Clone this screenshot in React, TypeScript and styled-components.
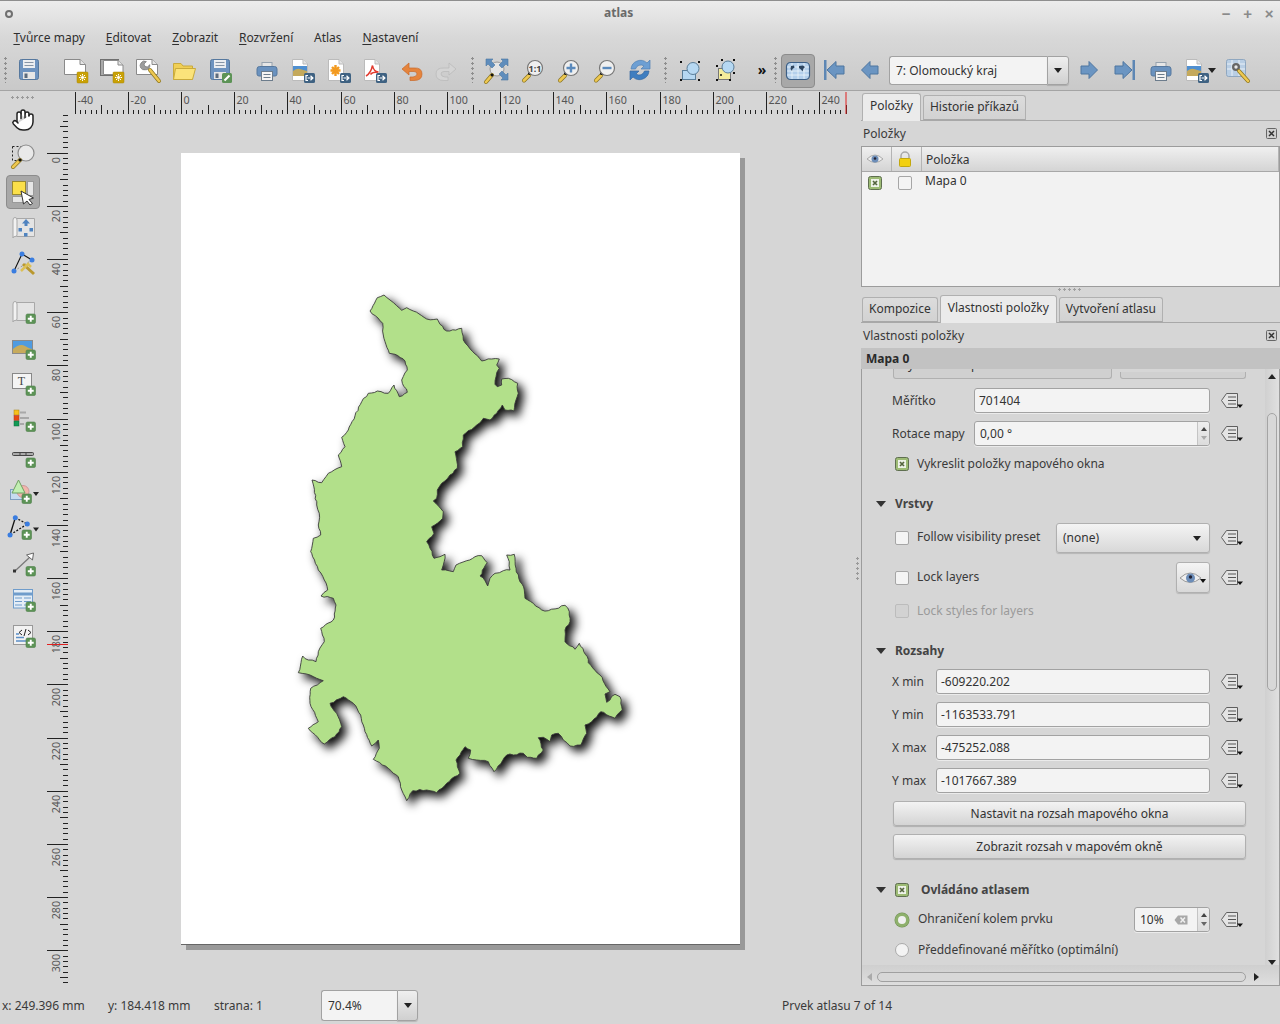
import React from 'react';
import styled, { createGlobalStyle } from 'styled-components';
import { Hand } from 'lucide-react';

const Global = createGlobalStyle`
  html, body { margin: 0; padding: 0; background: #d6d6d6; }
  * { box-sizing: border-box; }
`;

const Window = styled.div`
  width: 1280px; height: 1024px; overflow: hidden; display: flex; flex-direction: column;
  background: #d6d6d6; color: #333; font: 12px/16px "Noto Sans", "Open Sans", sans-serif;
`;
const Header = styled.div`
  height: 91px; flex: none; border-top: 1px solid #8e8e8e; border-bottom: 1px solid #a4a4a4;
  background: linear-gradient(#ececec, #d8d8d8 40%, #c9c9c9);
  display: flex; flex-direction: column;
`;
const TitleBar = styled.div`
  height: 25px; flex: none; display: flex; align-items: center; padding: 0 0 0 5px; position: relative;
`;
const WinDot = styled.span`
  width: 8px; height: 8px; border-radius: 50%; border: 2px solid #707070; margin-right: auto;
`;
const WinTitle = styled.span`
  position: absolute; left: 604px; top: 4px; font-weight: 700; font-size: 12px; color: #6a6a6a;
`;
const WinControl = styled.span`
  width: 21.5px; height: 16px; text-align: center; color: #8a8a8a; font: 700 15px/16px "Liberation Sans", sans-serif;
`;
const MenuBar = styled.div`
  height: 24px; flex: none; display: flex; align-items: center; padding-left: 3px; color: #2f2f2f;
`;
const MenuItem = styled.span`
  padding: 0 10.4px; u { text-underline-offset: 2px; }
`;
const Toolbar = styled.div`
  height: 39px; flex: none; display: flex; align-items: center; padding: 1px 0 0 4px;
`;
const Grip = styled.span<{ $mx?: number }>`
  width: 3px; height: 26px; flex: none; margin: 0 ${p => p.$mx ?? 2}px;
  background: radial-gradient(circle at 1.5px 1.5px, #8e8e8e 1.2px, transparent 1.4px) 0 0 / 3px 5px;
`;
const ToolButton = styled.span<{ $ml?: number; $w?: number }>`
  width: ${p => p.$w ?? 36}px; height: 36px; flex: none; display: flex; align-items: center; justify-content: center;
  margin-left: ${p => p.$ml ?? 0}px;
`;
const ToggledTool = styled(ToolButton)`
  width: 34px; height: 34px; margin-top: 2px; background: #a8a8a8; border: 1px solid #8c8c8c; border-radius: 4px;
`;
const More = styled.span`
  width: 20px; flex: none; margin-left: 8px; text-align: center; font: 700 14px/16px "Noto Sans", sans-serif; color: #111;
`;
const AtlasCombo = styled.div`
  width: 180px; height: 29px; flex: none; margin: 1px 0 0 1px; display: flex;
`;
const ComboField = styled.div`
  flex: 1; background: #f3f3f3; border: 1px solid #a2a2a2; border-right: none; border-radius: 3px 0 0 3px;
  padding-left: 6px; display: flex; align-items: center; color: #333; line-height: 16px;
`;
const ComboDrop = styled.div<{ $w: number }>`
  width: ${p => p.$w}px; flex: none; border: 1px solid #a2a2a2; border-radius: 0 3px 3px 0;
  background: linear-gradient(#efefef, #d0d0d0); display: flex; align-items: center; justify-content: center;
  box-shadow: 0 1px 1px rgba(0,0,0,.15);
`;
const DownTri = styled.span`
  width: 0; height: 0; border: 4px solid transparent; border-top: 5px solid #222; border-bottom: 0;
`;
const ExportDrop = styled(DownTri)`
  flex: none; margin-left: -7px;
`;

const Main = styled.div`
  flex: 1; min-height: 0; display: flex;
`;
const LeftBar = styled.div`
  width: 46px; flex: none; display: flex; flex-direction: column; align-items: center; padding-top: 5px;
`;
const LeftGrip = styled.div`
  width: 24px; height: 3px; margin-bottom: 3px; flex: none;
  background: radial-gradient(circle at 1.5px 1.5px, #9a9a9a 1.2px, transparent 1.4px) 0 0 / 5px 3px;
`;
const LeftButton = styled.div<{ $ml?: number; $mt?: number }>`
  width: 34px; height: 36px; flex: none; display: flex; align-items: center; justify-content: center;
  margin-top: ${p => p.$mt ?? 0}px; 
`;
const LeftToggled = styled(LeftButton)`
  height: 34px; margin: 1px 0; background: #a8a8a8; border: 1px solid #8c8c8c; border-radius: 4px;
`;
const Center = styled.div`
  width: 807px; flex: none; display: grid; grid-template-columns: 24px 783px; grid-template-rows: 23px 1fr;
`;
const Corner = styled.div``;
const RulerSvg = styled.svg`
  display: block;
  text { font-family: "Noto Sans", sans-serif; font-size: 10.7px; fill: #555; }
`;
const Canvas = styled.div`
  padding: 39px 0 0 111px; overflow: hidden;
`;
const Page = styled.div`
  width: 559px; height: 792px; background: #fff; border-bottom: 1px solid #666;
  box-shadow: 5px 5px 0 #999;
`;
const MapSvg = styled.svg`
  display: block; overflow: visible; filter: drop-shadow(5px 5px 5px rgba(0,0,0,.95));
`;
const Splitter = styled.div`
  width: 8px; flex: none; display: flex; align-items: center; justify-content: center; padding-top: 62px;
`;
const SplitDots = styled.div`
  width: 3px; height: 25px;
  background: radial-gradient(circle at 1.5px 1.5px, #9a9a9a 1.2px, transparent 1.4px) 0 0 / 3px 5px;
`;
const Right = styled.div`
  width: 419px; flex: none; display: flex; flex-direction: column;
`;
const TabBar = styled.div<{ $h: number }>`
  height: ${p => p.$h}px; flex: none; display: flex; align-items: flex-end; padding-left: 1px; gap: 2px;
  border-bottom: 1px solid #a8a8a8;
`;
const Tab = styled.div<{ $active?: boolean }>`
  height: ${p => (p.$active ? 28 : 25)}px; padding: 0 ${p => (p.$active ? 7 : 6)}px; border: 1px solid #b0b0b0;
  border-bottom: ${p => (p.$active ? 'none' : '1px solid #a8a8a8')};
  border-radius: 3px 3px 0 0; color: #333;
  display: flex; align-items: center; margin-bottom: ${p => (p.$active ? -1 : 0)}px;
  padding-bottom: ${p => (p.$active ? 3 : 2)}px;
  background: ${p => (p.$active ? '#ebebeb' : 'linear-gradient(#dcdcdc, #d2d2d2)')};
`;
const DockTitle = styled.div`
  height: 25px; flex: none; display: flex; align-items: center; justify-content: space-between;
  padding: 0 3px 0 2px; color: #3a3a3a;
`;
const CloseBox = styled.svg`
  display: block;
`;
const ItemsTable = styled.div`
  height: 141px; flex: none; border: 1px solid #9c9c9c; background: #f2f2f2;
`;
const TableHead = styled.div`
  height: 25px; display: flex; border-bottom: 1px solid #a8a8a8;
  background: linear-gradient(#f0f0f0, #d4d4d4);
`;
const HeadCell = styled.div<{ $w?: number }>`
  ${p => (p.$w ? `width: ${p.$w}px; padding-right: 3px;` : 'flex: 1; padding: 1px 0 0 4px;')}
  border-right: 1px solid #b4b4b4; display: flex; align-items: center; justify-content: ${p => (p.$w ? 'center' : 'flex-start')};
`;
const TableRow = styled.div`
  height: 22px; display: flex; align-items: center; color: #333; margin-left: -2px;
`;
const RowCell = styled.div`
  width: 30px; display: flex; justify-content: center;
`;
const RowName = styled.span`
  padding: 0 0 4px 5px;
`;
const HSplit = styled.div`
  height: 8px; flex: none; display: flex; justify-content: center;
`;
const HDots = styled.div`
  width: 25px; height: 3px; margin-top: 1px;
  background: radial-gradient(circle at 1.5px 1.5px, #a0a0a0 1.1px, transparent 1.3px) 0 0 / 5px 3px;
`;
const SubTitle = styled.div`
  height: 21px; flex: none; background: #c2c2c2; padding-left: 5px; font-weight: 700; color: #2a2a2a;
  display: flex; align-items: center;
`;
const ScrollArea = styled.div`
  flex: 1; min-height: 0; border: 1px solid #9c9c9c; border-top: none; display: grid;
  grid-template-columns: 1fr 14px; grid-template-rows: 1fr 20px; background: #d6d6d6;
`;
const ScrollContent = styled.div`
  overflow: hidden; display: flex; flex-direction: column; padding-right: 0; 
`;
const Row = styled.div<{ $h: number; $mt?: number; $pl: number }>`
  height: ${p => p.$h}px; flex: none; margin-top: ${p => p.$mt ?? 0}px; padding: 0 20px 0 ${p => p.$pl}px;
  display: flex; align-items: center; color: #3a3a3a;
`;
const Label = styled.span<{ $w?: number; $muted?: boolean; $ml?: number; $up?: boolean }>`
  ${p => (p.$w ? `width: ${p.$w}px; flex: none;` : '')}
  ${p => (p.$ml ? `margin-left: ${p.$ml}px;` : '')}
  ${p => (p.$up ? 'margin-bottom: 2px;' : '')}
  white-space: nowrap;
  color: ${p => (p.$muted ? '#9a9a9a' : '#3a3a3a')};
`;
const Section = styled.span<{ $ml?: number }>`
  font-weight: 700; color: #444; margin-left: ${p => p.$ml ?? 9}px;
`;
const Spread = styled.span`
  flex: 1;
`;
const TextField = styled.div`
  flex: 1; height: 25px; background: #f3f3f3; border: 1px solid #a2a2a2; border-radius: 3px; padding-left: 4px;
  display: flex; align-items: center; color: #333; box-shadow: 0 1px 0 rgba(255,255,255,.5);
`;
const SpinField = styled(TextField)`
  padding: 0;
`;
const SpinText = styled.span<{ $pl: number }>`
  flex: 1; padding-left: ${p => p.$pl}px;
`;
const SpinButtons = styled.div`
  width: 12px; height: 100%; flex: none; border-left: 1px solid #c4c4c4;
  display: flex; flex-direction: column; align-items: center; justify-content: center; gap: 5px;
  background: linear-gradient(#eee, #dcdcdc); border-radius: 0 3px 3px 0;
`;
const SpinUp = styled.span<{ $dim?: boolean }>`
  width: 0; height: 0; border: 3px solid transparent; border-top: 0; border-bottom: 4px solid ${p => (p.$dim ? '#aaa' : '#444')};
`;
const SpinDown = styled.span<{ $dim?: boolean }>`
  width: 0; height: 0; border: 3px solid transparent; border-bottom: 0; border-top: 4px solid ${p => (p.$dim ? '#aaa' : '#666')};
`;
const DDSlot = styled.span`
  width: 26px; margin-left: 9px; flex: none; display: flex; align-items: center; justify-content: center;
`;
const SelectBox = styled.div`
  width: 154px; height: 30px; flex: none; border: 1px solid #b0b0b0; border-radius: 3px;
  background: linear-gradient(#f4f4f4, #d8d8d8); display: flex; align-items: center; justify-content: space-between;
  padding: 0 8px 0 6px; color: #333; box-shadow: 0 1px 1px rgba(0,0,0,.15);
`;
const EyeButton = styled.div`
  width: 34px; height: 31px; flex: none; border: 1px solid #b0b0b0; border-radius: 3px;
  background: linear-gradient(#f4f4f4, #d8d8d8); display: flex; align-items: center; justify-content: center;
  box-shadow: 0 1px 1px rgba(0,0,0,.15);
`;
const ActionButton = styled.div`
  height: 25px; width: 353px; flex: none; border: 1px solid #b0b0b0; border-radius: 3px;
  background: linear-gradient(#f3f3f3, #d4d4d4); display: flex; align-items: center; justify-content: center;
  color: #333; box-shadow: 0 1px 1px rgba(0,0,0,.18);
`;
const ClippedRow = styled.div`
  height: 10px; flex: none; padding-left: 31px; display: flex; align-items: flex-end; gap: 8px;
`;
const ClippedButton = styled.div<{ $w: number; $h: number }>`
  width: ${p => p.$w}px; height: ${p => p.$h}px; flex: none; border: 1px solid #b0b0b0; border-top: none;
  border-radius: 0 0 3px 3px; background: #d0d0d0; overflow: hidden; position: relative;
`;
const ClippedGlyph = styled.span<{ $x: number }>`
  position: absolute; left: ${p => p.$x}px; top: -12px; color: #333;
`;
const SpinBox = styled(TextField)`
  flex: none; width: 76px; padding: 0;
`;
const VScroll = styled.div`
  display: flex; flex-direction: column; align-items: center; padding-top: 5px; background: linear-gradient(90deg, #d0d0d0, #e0e0e0);
`;
const ScrollUp = styled.span`
  width: 0; height: 0; flex: none; border: 4px solid transparent; border-top: 0; border-bottom: 5px solid #222; margin-bottom: 34px;
`;
const VThumb = styled.div`
  width: 10px; height: 278px; flex: none; border: 1px solid #a4a4a4; border-radius: 5px; background: #d8d8d8;
`;
const ScrollDown = styled.span`
  width: 0; height: 0; flex: none; border: 4px solid transparent; border-bottom: 0; border-top: 5px solid #222; margin-top: auto;
`;
const HScroll = styled.div`
  grid-column: 1 / 3; display: flex; align-items: center; padding: 3px 0 0 2px; background: linear-gradient(#cfcfcf, #dedede);
`;
const ScrollLeft = styled.span`
  width: 0; height: 0; flex: none; border: 4px solid transparent; border-left: 0; border-right: 5px solid #aaa; margin: 0 5px 0 3px;
`;
const HThumb = styled.div`
  width: 369px; height: 10px; flex: none; border: 1px solid #a0a0a0; border-radius: 5px; background: #d8d8d8;
`;
const ScrollRight = styled.span`
  width: 0; height: 0; flex: none; border: 4px solid transparent; border-right: 0; border-left: 5px solid #222; margin-left: 8px;
`;
const RadioDot = styled.span<{ $on?: boolean }>`
  width: 14px; height: 14px; flex: none; border-radius: 50%;
  border: ${p => (p.$on ? '3px solid #8eb06c' : '1px solid #aaa')};
  background: ${p => (p.$on ? '#f0f0f0' : '#f3f3f3')};
  ${p => (p.$on ? 'box-shadow: 0 0 0 .5px #6f8f55;' : '')}
`;
const CheckEmpty = styled.span<{ $muted?: boolean }>`
  width: 14px; height: 14px; flex: none; border-radius: 2px; border: 1px solid ${p => (p.$muted ? '#bcbcbc' : '#a6a6a6')};
  background: ${p => (p.$muted ? '#d2d2d2' : '#f4f4f4')}; display: block;
`;
const CheckSvg = styled.svg`
  display: block; flex: none;
`;
const StatusBar = styled.div`
  height: 38px; flex: none; display: flex; align-items: center; padding-left: 2px; color: #3a3a3a; padding-top: 1px;
`;
const StatusText = styled.span<{ $w?: number }>`
  ${p => (p.$w ? `width: ${p.$w}px; flex: none;` : '')}
`;
const ZoomCombo = styled.div`
  width: 97px; height: 31px; flex: none; display: flex; margin-right: 364px;
`;
const Ic = styled.svg`
  display: block; overflow: visible; flex: none;
`;
const DownTriLarge = styled.span`
  width: 0; height: 0; flex: none; border: 5.5px solid transparent; border-top: 6px solid #333; border-bottom: 0;
`;
const Spacer = styled.span`
  width: 9px; flex: none;
`;

/* ---------- icons ---------- */
const Box: React.FC<{ children: React.ReactNode; s?: number }> = ({ children, s = 28 }) => (
  <Ic width={s} height={s} viewBox="0 0 28 28">{children}</Ic>
);
const PlusB = ({ x = 17, y = 16 }: { x?: number; y?: number }) => (
  <g>
    <rect x={x} y={y} width={9.5} height={9.5} rx={1.5} fill="#5c9356" stroke="#4f7f4b" strokeWidth={0.6} />
    <path d={`M${x + 4.75} ${y + 1.8}v5.9M${x + 1.8} ${y + 4.75}h5.9`} stroke="#fff" strokeWidth={1.9} />
  </g>
);
const StarB = ({ x = 15, y = 16 }: { x?: number; y?: number }) => (
  <g>
    <rect x={x} y={y} width={11} height={11} rx={1} fill="#c9a106" stroke="#a98604" strokeWidth={0.5} />
    <path d={`M${x + 5.5} ${y + 2}v7M${x + 2} ${y + 5.5}h7M${x + 3} ${y + 3}l5 5M${x + 8} ${y + 3}l-5 5`} stroke="#fff" strokeWidth={1} />
    <circle cx={x + 5.5} cy={y + 5.5} r={1.9} fill="#fff" stroke="#c9a106" strokeWidth={0.6} />
  </g>
);
const ExpB = ({ x = 15, y = 17 }: { x?: number; y?: number }) => (
  <g>
    <rect x={x} y={y} width={11} height={10} rx={1.5} fill="#3f6282" />
    <path d={`M${x + 4} ${y + 2.5}h-2v5h2M${x + 3.5} ${y + 5}h5M${x + 6.5} ${y + 2.8}l2.4 2.2-2.4 2.2`} fill="none" stroke="#fff" strokeWidth={1.2} />
  </g>
);
const LandPage = () => (
  <g>
    <path d="M2.5 3.5H18L23.5 8.5V18.5H2.5Z" fill="#fff" stroke="#8a8a8a" />
    <path d="M18 3.5V8.5H23.5" fill="#e4e4e4" stroke="#8a8a8a" />
  </g>
);
const PortPage = () => (
  <g>
    <path d="M3.5 3.5H14L18.5 8V24.5H3.5Z" fill="#fff" stroke="#bbb" />
    <path d="M14 3.5V8H18.5" fill="#e4e4e4" stroke="#bbb" />
  </g>
);
const Floppy = ({ x = 0 }: { x?: number }) => (
  <g transform={`translate(${x} 0)`}>
    <rect x={5.5} y={3.5} width={19} height={20} rx={2} fill="#6e93bf" stroke="#56789e" />
    <rect x={9} y={4} width={12} height={8} fill="#eceef1" />
    <path d="M10.5 6.5h9M10.5 9.5h9" stroke="#8795a6" />
    <rect x={9} y={16} width={12} height={7} fill="#e6e6e6" />
    <rect x={10.5} y={17.5} width={3} height={4.5} fill="#5c6b7c" />
  </g>
);
const SaveI = () => <Box><Floppy /></Box>;
const NewI = () => <Box><LandPage /><StarB /></Box>;
const DupI = () => (
  <Box>
    <rect x={2.5} y={3.5} width={18} height={16} fill="#a9a9a9" stroke="#6f6f6f" />
    <path d="M5.5 4.5H20L25 9V18.5H5.5Z" fill="#fff" stroke="#8a8a8a" />
    <path d="M20 4.5V9H25" fill="#e4e4e4" stroke="#8a8a8a" />
    <StarB />
  </Box>
);
const Handle = ({ d }: { d: string }) => (
  <g>
    <path d={d} stroke="#8a7420" strokeWidth={4} strokeLinecap="round" />
    <path d={d} stroke="#eec851" strokeWidth={2.6} strokeLinecap="round" />
  </g>
);
const ManagerI = () => (
  <Box>
    <LandPage />
    <path d="M7 7a4 4 0 0 1 5.4-1.4L10 8l1 2.5 2.7.4 2-2.3A4.2 4.2 0 0 1 11 13.8 4.2 4.2 0 0 1 7 7Z" fill="#9c9c9c" stroke="#666" strokeWidth={0.6} />
    <Handle d="M16 14 25 25" />
  </Box>
);
const OpenI = () => (
  <Box>
    <path d="M3.5 23.5V7.5H11L13 10H22.5V23.5Z" fill="#f0cf55" stroke="#c9aa3c" />
    <path d="M3.5 23.5 5.5 12.5H25.5L22.5 23.5Z" fill="#fbe37a" stroke="#c9aa3c" />
  </Box>
);
const SaveAsI = () => (
  <Box>
    <Floppy x={-1} />
    <rect x={16} y={17} width={10} height={10} rx={1.5} fill="#5c9356" />
    <path d="M18.5 24.5 23.5 19.5" stroke="#fff" strokeWidth={2.2} />
  </Box>
);
const PrintI = () => (
  <Box>
    <rect x={9} y={6.5} width={10} height={6} fill="#e6e6e6" stroke="#96a2ae" />
    <path d="M4 18V13q0-2.5 2.5-2.5H21.5Q24 10.500 24 13V18q0 2-2 2H6q-2 0-2-2Z" fill="#6a92bf" stroke="#56789e" />
    <rect x={8.500} y={15.500} width={11} height={9} fill="#f4f4f4" stroke="#6c7c8c" />
    <path d="M10.500 18.500h7M10.500 21.500h7" stroke="#6c7c8c" />
  </Box>
);
const ExpImageI = () => (
  <Box>
    <PortPage />
    <rect x={4} y={10} width={14} height={5} fill="#4f8fd0" />
    <path d="M4 15q4-3 7-2t7 2v5H4Z" fill="#c4a95c" />
    <ExpB />
  </Box>
);
const ExpSvgI = () => (
  <Box>
    <PortPage />
    <path d="M10.500 9v11M5.500 14.500h10M7 11l7 7M14 11l-7 7" stroke="#f39a1f" strokeWidth={2.4} />
    <ExpB />
  </Box>
);
const ExpPdfI = () => (
  <Box>
    <PortPage />
    <path d="M5 20q5-3 6.500-10.500 1 6 6 6.500-6.500 0-8 2.500" fill="none" stroke="#e23a2e" strokeWidth={1.5} />
    <ExpB />
  </Box>
);
const UndoI = ({ c = '#e5843c', s = '#c8692a', flip }: { c?: string; s?: string; flip?: boolean }) => (
  <Box>
    <g transform={flip ? 'matrix(-1 0 0 1 28 0)' : undefined}>
      <path d="M12 7 5 13l7 6v-3.500h5q3 0 3 2.500t-4 3h-3v3.500h4q8 0 8-6.500t-8-6h-5Z" fill={c} stroke={s} strokeWidth={0.7} />
    </g>
  </Box>
);
const Lens = ({ cx = 16, cy = 12, r = 7.500, children }: { cx?: number; cy?: number; r?: number; children?: React.ReactNode }) => (
  <g>
    <Handle d={`M${cx - r - 3.500} ${cy + r + 5} L${cx - r + 1.500} ${cy + r}`} />
    <circle cx={cx - r + 2} cy={cy + r - 2} r={1.500} fill="#111" />
    <circle cx={cx} cy={cy} r={r} fill="#efefef" stroke="#777" strokeWidth={1.200} />
    {children}
  </g>
);
const ZoomFullI = () => (
  <Box>
    <circle cx={14} cy={13} r={7} fill="#e4e4e4" stroke="#999" />
    <path d="M3 3h7l-2 2 4 4-3 3-4-4-2 2ZM25 3v7l-2-2-4 4-3-3 4-4-2-2ZM25 24h-7l2-2-4-4 3-3 4 4 2-2Z" fill="#5f8dbc" stroke="#4b77a3" strokeWidth={0.6} />
    <Handle d="M3 26 9 19" />
    <circle cx={9} cy={19} r={1.500} fill="#111" />
  </Box>
);
const Zoom11I = () => (
  <Box><Lens><text x={16} y={15.500} textAnchor="middle" fontSize={9} fontWeight={700} fontFamily="Noto Sans" fill="#444">1:1</text></Lens></Box>
);
const ZoomInI = () => (
  <Box><Lens><path d="M16 7.500v9M11.500 12h9" stroke="#5b8abc" strokeWidth={2.400} /></Lens></Box>
);
const ZoomOutI = () => (
  <Box><Lens><path d="M11.500 12h9" stroke="#5b8abc" strokeWidth={2.400} /></Lens></Box>
);
const RefreshI = () => (
  <Box>
    <path d="M4 13a9.500 9.500 0 0 1 16-6l3-3v9h-9l3-3a5.500 5.500 0 0 0-8.500 3Z" fill="#6d9fd3" stroke="#4f80b4" strokeWidth={0.7} />
    <path d="M22 15a9.500 9.500 0 0 1-16 6l-3 3v-9h9l-3 3a5.500 5.500 0 0 0 8.500-3Z" fill="#3f7ec0" stroke="#3668a0" strokeWidth={0.7} />
  </Box>
);
const Dots = ({ pts }: { pts: number[][] }) => (
  <g>{pts.map(([x, y], i) => <rect key={i} x={x - 1} y={y - 1} width={2} height={2} fill="#111" />)}</g>
);
const GroupI = () => (
  <Box>
    <rect x={6.500} y={14.500} width={13} height={9} fill="#b6d8f2" stroke="#5b7e99" />
    <circle cx={17} cy={12.500} r={6} fill="#b6d8f2" stroke="#5b7e99" />
    <Dots pts={[[5, 6], [23, 6], [5, 24], [23, 24]]} />
  </Box>
);
const UngroupI = () => (
  <Box>
    <rect x={6.500} y={12.500} width={12} height={11} fill="#f3ec9b" stroke="#777" />
    <circle cx={16} cy={11} r={6} fill="#b6d8f2" stroke="#5b7e99" />
    <circle cx={9} cy={19} r={1} fill="#111" />
    <Dots pts={[[10, 4], [22, 4], [5, 10], [22, 17], [5, 24], [18, 24]]} />
  </Box>
);
const WorldI = () => (
  <Box>
    <rect x={2.500} y={5.500} width={23} height={17} rx={4} fill="#b4d0ec" stroke="#3d5f85" strokeWidth={1.200} />
    <path d="M3 10h22M3 14h22M3 18h22M8 6v16M14 6v16M20 6v16" stroke="#eef5fb" strokeWidth={0.800} />
    <path d="M7 9l3-.5.5 2-2 1.500-.5 2-1.500-2ZM15 9l4-.5 2 1.500-1.500 1.500-1 3-1.500-2-2-1.500Z" fill="#2c4560" />
  </Box>
);
const NavArrow = ({ dir, bar }: { dir: 'l' | 'r'; bar?: boolean }) => (
  <Box>
    <g transform={dir === 'r' ? 'matrix(-1 0 0 1 28 0)' : undefined}>
      {bar && <rect x={4} y={4} width={2.500} height={20} fill="#5e87b4" />}
      <path d={bar ? 'M7 14 16 5.500V10h8v8h-8v4.500Z' : 'M5.500 14 14 5.500V10h8v8h-8v4.500Z'} fill="#6b95c2" stroke="#4f76a0" />
    </g>
  </Box>
);
const AtlasSetI = () => (
  <Box>
    <rect x={3.500} y={3.500} width={19} height={17} rx={2} fill="#b9cee4" stroke="#8fa7c0" />
    <path d="M4 8h18M4 13h18M9 4v16M16 4v16" stroke="#e9f0f7" />
    <circle cx={13} cy={11} r={4} fill="#666" />
    <circle cx={13} cy={11} r={1.700} fill="#e8e8e8" />
    <Handle d="M16 15 25 25" />
  </Box>
);
const ZoomToolI = () => (
  <Box>
    <rect x={3.500} y={4.500} width={11} height={14} fill="none" stroke="#222" strokeDasharray="2 2" />
    <circle cx={17} cy={11} r={8} fill="#e9e9e9" stroke="#8c8c8c" strokeWidth={1.200} />
    <Handle d="M4 25 11 18" />
    <circle cx={11} cy={18} r={1.600} fill="#111" />
  </Box>
);
const SelectI = () => (
  <Box>
    <rect x={3.500} y={3.500} width={13} height={13} fill="#fbe04a" stroke="#9a8a2e" />
    <rect x={18.500} y={3.500} width={6} height={14} fill="#e6e6e6" stroke="#9a9a9a" />
    <rect x={3.500} y={18.500} width={12} height={6} fill="#e6e6e6" stroke="#9a9a9a" />
    <path d="M12 13 24.500 20 20 21.500 23.500 25.500 21 27 18 23 14.500 26Z" fill="#fff" stroke="#333" />
  </Box>
);
const RollPage = () => (
  <g>
    <path d="M7.500 4.500H25.500V22.500H7.500Z" fill="#e4e4e4" stroke="#a8a8a8" />
    <path d="M4 6q0-2.500 2-2.500t2 2.500V21q0 1.500-2 1.500t-2 1.500V6Z" fill="#f2f2f2" stroke="#a8a8a8" />
  </g>
);
const MoveI = () => (
  <Box>
    <RollPage />
    <path d="M17 5l4 4.500h-2.500V12h-3V9.500H13ZM9.500 14h3.500v3.500H9.500ZM20.500 14H24v3.500h-3.500ZM15 19h3.500v3.500H15Z" fill="#4f83bf" />
  </Box>
);
const NodesEditI = () => (
  <Box>
    <path d="M13 4 23 10M13 4 5 21" stroke="#111" strokeWidth={1.100} />
    <path d="M5 21 23 10" stroke="#999" strokeDasharray="2 2" />
    <circle cx={13} cy={4} r={2.500} fill="#3a7de0" />
    <circle cx={23} cy={10} r={2.500} fill="#3a7de0" />
    <circle cx={5} cy={21} r={2.500} fill="#3a7de0" />
    <path d="M14 14 25 24" stroke="#b9982f" strokeWidth={3} />
    <path d="M12 21 19 14l3 3" stroke="#dcc056" strokeWidth={2.500} fill="none" />
  </Box>
);
const AddMapI = () => <Box><RollPage /><PlusB /></Box>;
const AddImageI = () => (
  <Box>
    <rect x={3.500} y={6.500} width={20} height={13} fill="#4f9be0" stroke="#8a8a8a" />
    <path d="M4 15q7-6 12-3t7 3v4H4Z" fill="#c7ab5c" />
    <PlusB />
  </Box>
);
const AddTextI = () => (
  <Box>
    <rect x={3.500} y={3.500} width={19} height={15} fill="#f4f4f4" stroke="#888" />
    <text x={12.500} y={15} textAnchor="middle" fontSize={12} fontFamily="Liberation Serif" fill="#444">T</text>
    <PlusB />
  </Box>
);
const AddLegendI = () => (
  <Box>
    <rect x={5} y={4} width={5} height={5} fill="#f8c01c" stroke="#a8820f" strokeWidth={0.5} />
    <rect x={5} y={9.500} width={5} height={5} fill="#e84a10" stroke="#a33" strokeWidth={0.5} />
    <rect x={5} y={15} width={5} height={5} fill="#119a55" stroke="#0b6b3a" strokeWidth={0.5} />
    <path d="M11 6.500h6M11 12h9M11 18h4" stroke="#a8a8a8" strokeWidth={1.800} />
    <PlusB />
  </Box>
);
const AddScaleI = () => (
  <Box>
    <rect x={3.500} y={10.500} width={21} height={3} rx={1} fill="#aaa" stroke="#444" />
    <path d="M11 11v2M17 11v2" stroke="#444" />
    <PlusB />
  </Box>
);
const AddShapeI = () => (
  <Box>
    <rect x={1.500} y={11.500} width={16} height={10} fill="#c7dcf0" stroke="#7e9ec0" />
    <circle cx={14} cy={13.500} r={6} fill="#f2b5ac" stroke="#c99" />
    <path d="M9.500 2 16 15H3Z" fill="#c2efb2" stroke="#6fa062" />
    <PlusB x={13} y={16} />
    <path d="M24 14h6l-3 4Z" fill="#222" />
  </Box>
);
const AddNodesI = () => (
  <Box>
    <path d="M6.300 3.700 1 21" stroke="#111" strokeWidth={1.300} />
    <path d="M6.300 3.700 18.300 10 1 21" stroke="#111" strokeWidth={1.300} strokeDasharray="2 1.500" fill="none" />
    <circle cx={6.300} cy={3.700} r={2.500} fill="#3a7de0" />
    <circle cx={18.300} cy={10} r={2.500} fill="#3a7de0" />
    <circle cx={1} cy={21} r={2.500} fill="#3a7de0" />
    <PlusB x={13} y={16} />
    <path d="M24 13.500h6l-3 4Z" fill="#222" />
  </Box>
);
const AddArrowI = () => (
  <Box>
    <path d="M6 21 21 7" stroke="#777" strokeWidth={1.200} />
    <rect x={4} y={19.500} width={3} height={3} fill="#333" />
    <path d="M24.500 3l-1 7-6-5Z" fill="#fff" stroke="#666" />
    <PlusB x={17} y={16.500} />
  </Box>
);
const AddTableI = () => (
  <Box>
    <rect x={4.500} y={3.500} width={19} height={18.500} fill="#e4edf6" stroke="#6f9ccb" />
    <path d="M5 8h18" stroke="#6f9ccb" strokeWidth={3} />
    <path d="M6 12h7M15 12h7M6 15.500h7M15 15.500h7M6 19h7M15 19h3" stroke="#6f9ccb" />
    <PlusB />
  </Box>
);
const AddHtmlI = () => (
  <Box>
    <rect x={4.500} y={3.500} width={19} height={19} fill="#f2f2f2" stroke="#999" />
    <path d="M13 8 10 10.500l3 2.500M19 8l3 2.500-3 2.500M17 7l-2 7" stroke="#222" fill="none" />
    <path d="M7 12h3M7 15.500h8M7 19h10" stroke="#5b8fc8" strokeWidth={1.700} />
    <PlusB />
  </Box>
);
const DD = () => (
  <Ic width={24} height={16} viewBox="0 0 24 16">
    <path d="M1.500 7.500 6.500.5H17.500V14.500H6.500Z" fill="#e4e4e4" stroke="#5f5f5f" />
    <path d="M8 4h8M8 7.500h8M8 11h8" stroke="#555" />
    <path d="M17 11.500h6l-3 3.500Z" fill="#111" />
  </Ic>
);
const Close = () => (
  <CloseBox width={11} height={11} viewBox="0 0 11 11">
    <rect x={0.5} y={0.5} width={10} height={10} rx={1} fill="#d0d0d0" stroke="#666" />
    <path d="M3 3 8 8M8 3 3 8" stroke="#333" strokeWidth={1.500} />
  </CloseBox>
);
const Checked = () => (
  <CheckSvg width={14} height={14} viewBox="0 0 14 14">
    <rect x={0.5} y={0.5} width={13} height={13} rx={2} fill="#9dbb75" stroke="#5f6f50" />
    <rect x={3} y={3} width={8} height={8} fill="#eef2e8" />
    <path d="M5 5 9 9M9 5 5 9" stroke="#55653f" strokeWidth={1.700} />
  </CheckSvg>
);
const Eye = () => (
  <Ic width={18} height={12} viewBox="0 0 18 12">
    <path d="M1 6q8-8 16 0-8 7-16 0Z" fill="#eee" stroke="#aaa" />
    <circle cx={9} cy={6} r={3.500} fill="#6c8db8" />
    <circle cx={9} cy={5.500} r={1.300} fill="#223" />
  </Ic>
);
const Lock = () => (
  <Ic width={14} height={16} viewBox="0 0 14 16">
    <path d="M3 8V5a4 4 0 0 1 8 0v3" fill="none" stroke="#a8a8a8" strokeWidth={1.500} />
    <rect x={1.5} y={7.5} width={11} height={8} rx={1} fill="#f2d011" stroke="#c2a70e" />
  </Ic>
);
const EyeDrop = () => (
  <Ic width={28} height={16} viewBox="0 0 28 16">
    <path d="M1 8q10-10 21 0-11 9-21 0Z" fill="#eee" stroke="#999" />
    <circle cx={11.500} cy={8} r={4.500} fill="#6c8db8" />
    <circle cx={11.500} cy={7} r={1.700} fill="#223" />
    <path d="M21 9h6l-3 4Z" fill="#111" />
  </Ic>
);
const ClearX = () => (
  <Ic width={14} height={10} viewBox="0 0 14 10">
    <path d="M4 .5H13.500V9.500H4L.5 5Z" fill="#a8a8a8" />
    <path d="M6.500 2.500 11 7.500M11 2.500 6.500 7.500" stroke="#f0f0f0" strokeWidth={1.500} />
  </Ic>
);

/* ---------- rulers ---------- */
const PX = 2.6585;
const XRuler = () => {
  const ticks = [];
  for (let mm = -40; mm <= 250; mm += 2) {
    const x = Math.round(181 + mm * PX - 70) + 0.5;
    const major = mm % 20 === 0;
    const mid = mm % 10 === 0;
    ticks.push(<line key={mm} x1={x} x2={x} y1={major ? 1 : mid ? 14 : 19} y2={23} stroke="#222" />);
    if (major && mm <= 240) ticks.push(<text key={`t${mm}`} x={x + 2} y={13}>{mm}</text>);
  }
  return (
    <RulerSvg width={783} height={23}>
      {ticks}
      <line x1={776} x2={776} y1={1} y2={23} stroke="#e02020" />
    </RulerSvg>
  );
};
const YRuler = () => {
  const ticks = [];
  for (let mm = -14; mm <= 312; mm += 2) {
    const y = Math.round(152.7 + mm * PX - 114) + 0.5;
    const major = mm % 20 === 0;
    const mid = mm % 10 === 0;
    ticks.push(<line key={mm} y1={y} y2={y} x1={major ? 1 : mid ? 14 : 17} x2={22} stroke="#222" />);
    if (major && mm >= 0) {
      ticks.push(<text key={`t${mm}`} textAnchor="end" transform={`translate(14 ${y + 3.5}) rotate(-90)`}>{mm}</text>);
    }
  }
  return (
    <RulerSvg width={24} height={871}>
      {ticks}
      <line y1={530.5} y2={530.5} x1={1} x2={22} stroke="#e02020" />
    </RulerSvg>
  );
};

/* ---------- map outline ---------- */
const north = [282,30,300,45,320,62,335,76,350,68,370,78,395,92,410,102,442,102,450,118,470,138,515,130,520,165,548,200,575,228,605,222,628,222,620,240,628,250,618,275,615,298,622,305,635,300,635,282,655,280,683,295,685,325,678,345,672,378,645,375,637,360,620,385,600,405,580,400,560,420,520,450,518,485,495,500,502,550,480,570,455,595,442,615,440,640,430,648,460,680,458,700,425,725,432,745,410,770,420,790,432,820,450,815,465,808,460,840];
const south = [455,90,490,95,498,75,530,62,555,50,575,47,592,68,570,108,585,122,593,138,600,115,615,100,640,92,660,90,658,65,650,45,673,43,678,85,690,125,703,150,705,175,730,190,755,210,775,212,825,196,838,215,840,245,825,270,825,305,855,328,868,310,892,350,895,368,930,405,960,455,945,462,950,487,975,463,990,470,997,510,975,535,932,515,905,545,885,555,890,580,872,615,840,618,820,600,805,580,785,585,780,605,760,592,745,593,760,630,740,655,712,652,700,640,650,645,612,695,595,665,560,660,535,655,542,630,525,620,498,660,510,700,470,730,440,758,410,750,368,752,350,782,335,750,325,710,295,685,250,658,268,625,265,600,245,618,225,575,212,525,190,490,160,470,120,490,140,520,155,560,135,590,103,612,55,565,85,545,60,490,62,445,100,422,60,405,25,398,38,348,55,360,78,365,85,335,103,305,92,265,130,240,138,195,130,175,93,168,113,150,103,120,85,90,65,40];
const west = [62,800,70,760,92,750,85,720,88,685,80,660,66,585,95,593,115,565,155,545,145,510,165,485,155,457,175,435,215,350,235,325,262,318,295,325,312,300,328,335,352,322,335,285,352,255,345,228,315,208,298,205,280,150,278,115,240,78,262,38];
const toPts = (a: number[], oy: number) => {
  const out: [number, number][] = [];
  for (let i = 0; i < a.length; i += 2) out.push([290 + a[i] / 3, oy + a[i + 1] / 3]);
  return out;
};
const outline = (() => {
  const pts = [...toPts(north, 285), ...toPts(south, 540), ...toPts(west, 285)];
  const res: string[] = [];
  let seed = 3;
  const rnd = () => {
    const v = Math.sin(seed++ * 12.9898) * 43758.5453;
    return v - Math.floor(v) - 0.5;
  };
  pts.forEach((p, i) => {
    const q = pts[(i + 1) % pts.length];
    const dx = q[0] - p[0], dy = q[1] - p[1];
    const len = Math.hypot(dx, dy);
    const n = Math.max(1, Math.floor(len / 3));
    for (let j = 0; j < n; j++) {
      const t = j / n;
      const o = j === 0 ? 0 : rnd() * 1.6;
      res.push(`${(p[0] + dx * t - (dy / len) * o).toFixed(1)},${(p[1] + dy * t + (dx / len) * o).toFixed(1)}`);
    }
  });
  return res.join(' ');
})();

const menu: [string, string][] = [['T', 'vůrce mapy'], ['E', 'ditovat'], ['Z', 'obrazit'], ['R', 'ozvržení'], ['', 'Atlas'], ['N', 'astavení']];
const extents: [string, string][] = [['X min', '-609220.202'], ['Y min', '-1163533.791'], ['X max', '-475252.088'], ['Y max', '-1017667.389']];

export default function App() {
  return (
    <Window>
      <Global />
      <Header>
        <TitleBar>
          <WinDot />
          <WinTitle>atlas</WinTitle>
          <WinControl>−</WinControl>
          <WinControl>+</WinControl>
          <WinControl>×</WinControl>
        </TitleBar>
        <MenuBar>
          {menu.map(([u, r]) => <MenuItem key={r}>{u && <u>{u}</u>}{r}</MenuItem>)}
        </MenuBar>
        <Toolbar>
          <Grip $mx={0} />
          <ToolButton $ml={3}><SaveI /></ToolButton>
          <ToolButton $ml={12}><NewI /></ToolButton>
          <ToolButton><DupI /></ToolButton>
          <ToolButton><ManagerI /></ToolButton>
          <ToolButton><OpenI /></ToolButton>
          <ToolButton><SaveAsI /></ToolButton>
          <ToolButton $ml={11}><PrintI /></ToolButton>
          <ToolButton><ExpImageI /></ToolButton>
          <ToolButton><ExpSvgI /></ToolButton>
          <ToolButton><ExpPdfI /></ToolButton>
          <ToolButton><UndoI /></ToolButton>
          <ToolButton><UndoI c="#d4d4d4" s="#b8b8b8" flip /></ToolButton>
          <Grip $mx={5.500} />
          <ToolButton><ZoomFullI /></ToolButton>
          <ToolButton><Zoom11I /></ToolButton>
          <ToolButton><ZoomInI /></ToolButton>
          <ToolButton><ZoomOutI /></ToolButton>
          <ToolButton><RefreshI /></ToolButton>
          <Grip $mx={5} />
          <ToolButton><GroupI /></ToolButton>
          <ToolButton><UngroupI /></ToolButton>
          <More>»</More>
          <Grip $mx={2} />
          <ToggledTool $ml={2}><WorldI /></ToggledTool>
          <ToolButton $ml={1}><NavArrow dir="l" bar /></ToolButton>
          <ToolButton><NavArrow dir="l" /></ToolButton>
          <AtlasCombo>
            <ComboField>7: Olomoucký kraj</ComboField>
            <ComboDrop $w={22}><DownTri /></ComboDrop>
          </AtlasCombo>
          <ToolButton $ml={2}><NavArrow dir="r" /></ToolButton>
          <ToolButton><NavArrow dir="r" bar /></ToolButton>
          <ToolButton><PrintI /></ToolButton>
          <ToolButton><ExpImageI /></ToolButton>
          <ExportDrop />
          <ToolButton $ml={3}><AtlasSetI /></ToolButton>
        </Toolbar>
      </Header>
      <Main>
        <LeftBar>
          <LeftGrip />
          <LeftButton><Hand size={24} fill="#fff" stroke="#222" strokeWidth={1.5} /></LeftButton>
          <LeftButton><ZoomToolI /></LeftButton>
          <LeftToggled><SelectI /></LeftToggled>
          <LeftButton><MoveI /></LeftButton>
          <LeftButton><NodesEditI /></LeftButton>
          <LeftButton $mt={12}><AddMapI /></LeftButton>
          <LeftButton><AddImageI /></LeftButton>
          <LeftButton><AddTextI /></LeftButton>
          <LeftButton><AddLegendI /></LeftButton>
          <LeftButton><AddScaleI /></LeftButton>
          <LeftButton><AddShapeI /></LeftButton>
          <LeftButton><AddNodesI /></LeftButton>
          <LeftButton><AddArrowI /></LeftButton>
          <LeftButton><AddTableI /></LeftButton>
          <LeftButton><AddHtmlI /></LeftButton>
        </LeftBar>
        <Center>
          <Corner />
          <XRuler />
          <YRuler />
          <Canvas>
            <Page>
              <MapSvg width={559} height={790} viewBox="181 153 559 790">
                <polygon points={outline} fill="#b2e08a" stroke="#3c3c3c" strokeWidth={0.9} />
              </MapSvg>
            </Page>
          </Canvas>
        </Center>
        <Splitter><SplitDots /></Splitter>
        <Right>
          <TabBar $h={30}>
            <Tab $active>Položky</Tab>
            <Tab>Historie příkazů</Tab>
          </TabBar>
          <DockTitle>Položky<Close /></DockTitle>
          <ItemsTable>
            <TableHead>
              <HeadCell $w={30}><Eye /></HeadCell>
              <HeadCell $w={30}><Lock /></HeadCell>
              <HeadCell>Položka</HeadCell>
            </TableHead>
            <TableRow>
              <RowCell><Checked /></RowCell>
              <RowCell><CheckEmpty /></RowCell>
              <RowName>Mapa 0</RowName>
            </TableRow>
          </ItemsTable>
          <HSplit><HDots /></HSplit>
          <TabBar $h={28}>
            <Tab>Kompozice</Tab>
            <Tab $active>Vlastnosti položky</Tab>
            <Tab>Vytvoření atlasu</Tab>
          </TabBar>
          <DockTitle>Vlastnosti položky<Close /></DockTitle>
          <SubTitle>Mapa 0</SubTitle>
          <ScrollArea>
            <ScrollContent>
              <ClippedRow>
                <ClippedButton $w={219} $h={10}>
                  <ClippedGlyph $x={14}>y</ClippedGlyph>
                  <ClippedGlyph $x={77}>p</ClippedGlyph>
                </ClippedButton>
                <ClippedButton $w={126} $h={7} />
              </ClippedRow>
              <Row $h={25} $mt={9} $pl={30}>
                <Label $w={82}>Měřítko</Label>
                <TextField>701404</TextField>
                <DDSlot><DD /></DDSlot>
              </Row>
              <Row $h={25} $mt={8} $pl={30}>
                <Label $w={82}>Rotace mapy</Label>
                <SpinField>
                  <SpinText $pl={5}>0,00 °</SpinText>
                  <SpinButtons><SpinUp /><SpinDown $dim /></SpinButtons>
                </SpinField>
                <DDSlot><DD /></DDSlot>
              </Row>
              <Row $h={20} $mt={8} $pl={33}>
                <Checked />
                <Label $ml={8}>Vykreslit položky mapového okna</Label>
              </Row>
              <Row $h={20} $mt={20} $pl={14}>
                <DownTriLarge />
                <Section>Vrstvy</Section>
              </Row>
              <Row $h={30} $mt={9} $pl={33}>
                <CheckEmpty />
                <Label $w={139} $ml={8} $up>Follow visibility preset</Label>
                <SelectBox>(none)<DownTri /></SelectBox>
                <DDSlot><DD /></DDSlot>
              </Row>
              <Row $h={31} $mt={9} $pl={33}>
                <CheckEmpty />
                <Label $ml={8} $up>Lock layers</Label>
                <Spread />
                <EyeButton><EyeDrop /></EyeButton>
                <DDSlot><DD /></DDSlot>
              </Row>
              <Row $h={20} $mt={8} $pl={33}>
                <CheckEmpty $muted />
                <Label $ml={8} $muted>Lock styles for layers</Label>
              </Row>
              <Row $h={20} $mt={20} $pl={14}>
                <DownTriLarge />
                <Section>Rozsahy</Section>
              </Row>
              {extents.map(([k, v], i) => (
                <Row key={k} $h={25} $mt={8} $pl={30}>
                  <Label $w={44}>{k}</Label>
                  <TextField>{v}</TextField>
                  <DDSlot><DD /></DDSlot>
                </Row>
              ))}
              <Row $h={25} $mt={8} $pl={31}><ActionButton>Nastavit na rozsah mapového okna</ActionButton></Row>
              <Row $h={25} $mt={8} $pl={31}><ActionButton>Zobrazit rozsah v mapovém okně</ActionButton></Row>
              <Row $h={20} $mt={21} $pl={14}>
                <DownTriLarge />
                <Spacer />
                <Checked />
                <Section $ml={12}>Ovládáno atlasem</Section>
              </Row>
              <Row $h={25} $mt={7} $pl={33}>
                <RadioDot $on />
                <Label $ml={9} $up>Ohraničení kolem prvku</Label>
                <Spread />
                <SpinBox>
                  <SpinText $pl={5}>10%</SpinText>
                  <ClearX />
                  <Spacer />
                  <SpinButtons><SpinUp /><SpinDown /></SpinButtons>
                </SpinBox>
                <DDSlot><DD /></DDSlot>
              </Row>
              <Row $h={20} $mt={8} $pl={33}>
                <RadioDot />
                <Label $ml={9}>Předdefinované měřítko (optimální)</Label>
              </Row>
            </ScrollContent>
            <VScroll>
              <ScrollUp />
              <VThumb />
              <ScrollDown />
            </VScroll>
            <HScroll>
              <ScrollLeft />
              <HThumb />
              <ScrollRight />
            </HScroll>
          </ScrollArea>
        </Right>
      </Main>
      <StatusBar>
        <StatusText $w={106}>x: 249.396 mm</StatusText>
        <StatusText $w={106}>y: 184.418 mm</StatusText>
        <StatusText $w={107}>strana: 1</StatusText>
        <ZoomCombo>
          <ComboField>70.4%</ComboField>
          <ComboDrop $w={21}><DownTri /></ComboDrop>
        </ZoomCombo>
        <StatusText>Prvek atlasu 7 of 14</StatusText>
      </StatusBar>
    </Window>
  );
}
